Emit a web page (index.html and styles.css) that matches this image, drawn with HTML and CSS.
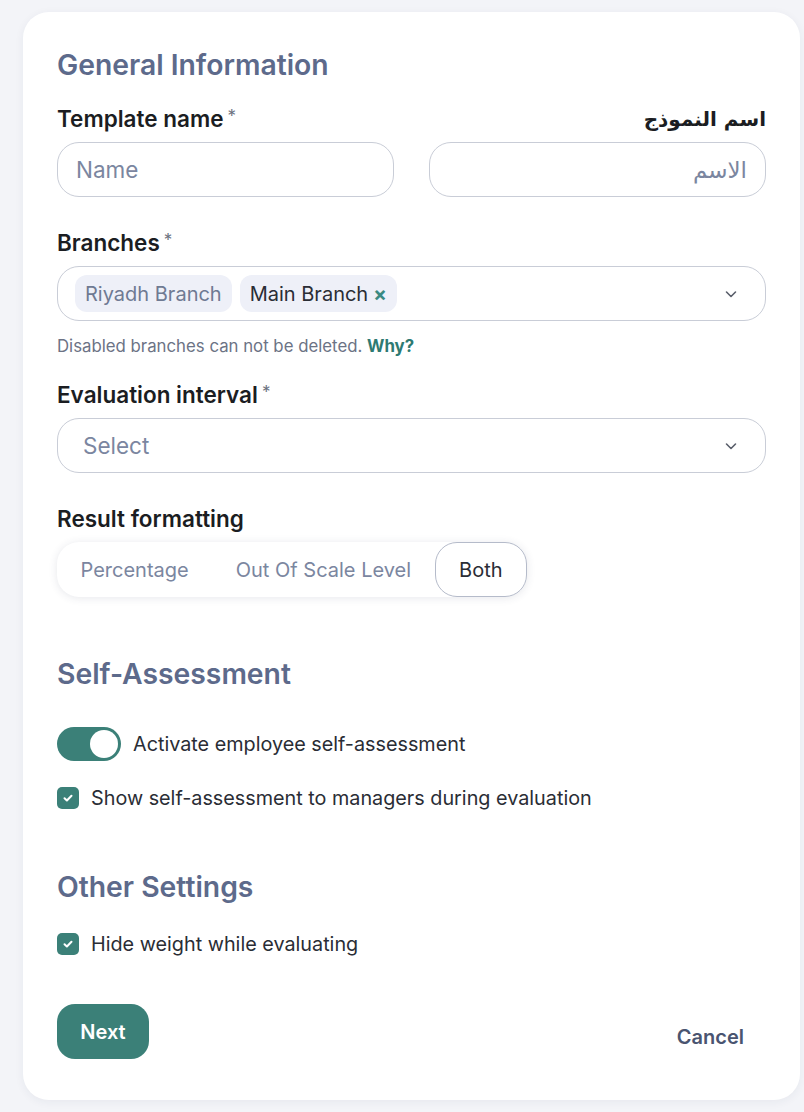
FILE: index.html
```html
<!DOCTYPE html>
<html lang="en">
<head>
<meta charset="utf-8">
<link rel="stylesheet" href="styles.css">
</head>
<body>
<div class="page">
  <div class="card">
    <h2 class="section-title first">General Information</h2>

    <div class="row-two">
      <div class="field">
        <div class="label">Template name<span class="req">*</span></div>
        <div class="input"><span class="placeholder">Name</span></div>
      </div>
      <div class="field rtl" dir="rtl">
        <div class="label ar">اسم النموذج</div>
        <div class="input"><span class="placeholder ar">الاسم</span></div>
      </div>
    </div>

    <div class="field block">
      <div class="label">Branches<span class="req">*</span></div>
      <div class="input select">
        <div class="chips">
          <span class="chip disabled">Riyadh Branch</span>
          <span class="chip">Main Branch <span class="chip-x">×</span></span>
        </div>
        <svg class="chev" width="16" height="16" viewBox="0 0 16 16"><path d="M3.5 6l4.5 4.5L12.5 6" fill="none" stroke="#5a5f6b" stroke-width="1.6" stroke-linecap="round" stroke-linejoin="round"/></svg>
      </div>
      <div class="help">Disabled branches can not be deleted. <span class="why">Why?</span></div>
    </div>

    <div class="field block after-help">
      <div class="label">Evaluation interval<span class="req">*</span></div>
      <div class="input select">
        <span class="placeholder">Select</span>
        <svg class="chev" width="16" height="16" viewBox="0 0 16 16"><path d="M3.5 6l4.5 4.5L12.5 6" fill="none" stroke="#5a5f6b" stroke-width="1.6" stroke-linecap="round" stroke-linejoin="round"/></svg>
      </div>
    </div>

    <div class="field block">
      <div class="label">Result formatting</div>
      <div class="segment">
        <span class="seg">Percentage</span>
        <span class="seg">Out Of Scale Level</span>
        <span class="seg active">Both</span>
      </div>
    </div>

    <h2 class="section-title">Self-Assessment</h2>
    <div class="toggle-row">
      <span class="toggle"><span class="knob"></span></span>
      <span class="opt-text">Activate employee self-assessment</span>
    </div>
    <div class="check-row">
      <span class="check"><svg width="14" height="14" viewBox="0 0 14 14"><path d="M3.5 7.2l2.4 2.3 4.6-4.8" fill="none" stroke="#fff" stroke-width="2" stroke-linecap="round" stroke-linejoin="round"/></svg></span>
      <span class="opt-text">Show self-assessment to managers during evaluation</span>
    </div>

    <h2 class="section-title compact">Other Settings</h2>
    <div class="check-row">
      <span class="check"><svg width="14" height="14" viewBox="0 0 14 14"><path d="M3.5 7.2l2.4 2.3 4.6-4.8" fill="none" stroke="#fff" stroke-width="2" stroke-linecap="round" stroke-linejoin="round"/></svg></span>
      <span class="opt-text">Hide weight while evaluating</span>
    </div>

    <div class="actions">
      <button class="btn-next">Next</button>
      <button class="btn-cancel">Cancel</button>
    </div>
  </div>
</div>
</body>
</html>
```

FILE: styles.css
```css
* { box-sizing: border-box; }
html, body { margin: 0; padding: 0; }
body {
  background: #f3f4f8;
  font-family: Inter, "Noto Sans", sans-serif;
  color: #1d1f24;
  width: 804px;
  height: 1112px;
  overflow: hidden;
}
.page {
  padding: 12px 4px 12px 23px;
}
.card {
  background: #fff;
  border-radius: 26px;
  height: 1088px;
  padding: 34px 34px 0 34px;
  box-shadow: 0 2px 10px rgba(40, 50, 80, 0.06);
}
.section-title {
  margin: 0;
  font-size: 28.3px;
  font-weight: 600;
  color: #5d6a8b;
  line-height: 38px;
  margin-top: 58px;
  margin-bottom: 34px;
}
.section-title.first {
  margin-top: 0;
  margin-bottom: 21px;
}
.section-title.compact {
  margin-bottom: 26px;
}
.row-two {
  display: flex;
  gap: 35px;
}
.row-two .field { flex: 1; }
.label {
  font-size: 22.5px;
  font-weight: 600;
  color: #1b1d22;
  line-height: 28px;
  margin-bottom: 9px;
}
.label.ar {
  font-family: "DejaVu Sans", "Noto Sans", sans-serif;
  font-size: 20px;
  font-weight: 700;
}
.req {
  color: #6b7280;
  font-weight: 400;
  font-size: 17px;
  vertical-align: top;
  margin-left: 4px;
  line-height: 22px;
}
.input {
  height: 55px;
  border: 1.5px solid #c9cdd7;
  border-radius: 22px;
  display: flex;
  align-items: center;
  padding: 0 18px;
  background: #fff;
}
.placeholder {
  font-size: 22.5px;
  color: #7b86a0;
}
.placeholder.ar {
  font-family: "DejaVu Sans", "Noto Sans", sans-serif;
  font-size: 23px;
}
.field.block { margin-top: 32px; }
.field.block.after-help { margin-top: 25px; }
.select {
  justify-content: space-between;
  padding: 0 26px 0 17px;
}
.select .placeholder { padding-left: 8px; }
.chips { display: flex; gap: 8px; }
.chip {
  background: #eef0f8;
  border-radius: 12px;
  height: 37px;
  display: inline-flex;
  align-items: center;
  padding: 0 10px;
  font-size: 20px;
  color: #2a2d35;
}
.chip.disabled { color: #6f7a93; }
.chip-x {
  color: #3a8a82;
  font-weight: 700;
  margin-left: 5px;
  font-size: 20px;
}
.help {
  font-size: 16.8px;
  line-height: 20px;
  color: #6c7385;
  margin-top: 15px;
}
.why { color: #2e7a72; font-weight: 700; }
.segment {
  display: inline-flex;
  align-items: center;
  background: #fff;
  border-radius: 22px;
  box-shadow: 0 1px 8px rgba(50, 60, 90, 0.12);
  height: 55px;
}
.seg {
  font-size: 20px;
  color: #7b86a0;
  padding: 0 23.5px;
  height: 55px;
  display: inline-flex;
  align-items: center;
}
.seg.active {
  color: #2a2d35;
  border: 1.5px solid #b5bbca;
  border-radius: 22px;
}
.toggle-row, .check-row {
  display: flex;
  align-items: center;
  gap: 12px;
}
.toggle {
  width: 64px;
  height: 34px;
  border-radius: 17px;
  background: #3b8078;
  position: relative;
  flex: none;
}
.knob {
  position: absolute;
  right: 3px;
  top: 3px;
  width: 28px;
  height: 28px;
  border-radius: 50%;
  background: #fff;
}
.opt-text {
  font-size: 19.8px;
  line-height: 24px;
  color: #2a2d35;
}
.check-row { margin-top: 25px; }
.check {
  width: 22px;
  height: 22px;
  border-radius: 5px;
  background: #3b8078;
  display: inline-flex;
  align-items: center;
  justify-content: center;
  flex: none;
}
.section-title + .check-row { margin-top: 0; }
.actions {
  display: flex;
  justify-content: space-between;
  align-items: center;
  margin-top: 48px;
  padding-right: 22px;
}
.btn-next {
  background: #3b8078;
  color: #fff;
  border: none;
  border-radius: 18px;
  height: 55px;
  width: 92px;
  font-family: Inter, sans-serif;
  font-size: 20px;
  font-weight: 600;
}
.btn-cancel {
  background: none;
  border: none;
  font-family: Inter, sans-serif;
  font-size: 20px;
  font-weight: 600;
  color: #4a5470;
  padding: 0;
  margin-top: 11px;
}
```
